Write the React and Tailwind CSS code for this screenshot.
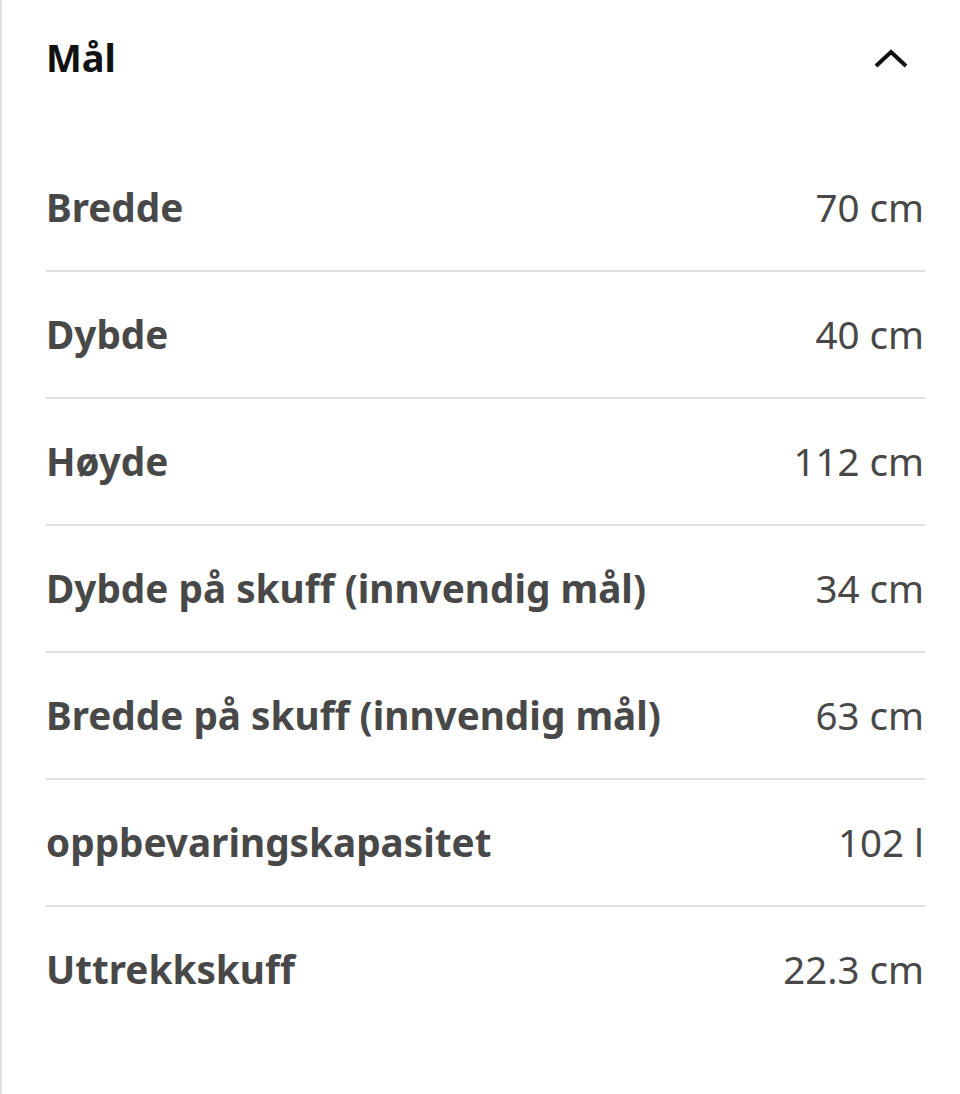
const rows = [
  ["Bredde", "70 cm"],
  ["Dybde", "40 cm"],
  ["Høyde", "112 cm"],
  ["Dybde på skuff (innvendig mål)", "34 cm"],
  ["Bredde på skuff (innvendig mål)", "63 cm"],
  ["oppbevaringskapasitet", "102 l"],
  ["Uttrekkskuff", "22.3 cm"],
];

export default function App() {
  return (
    <div
      className="min-h-[1094px] bg-white border-l-2 border-[#e0e0e0] pl-[44px] pr-[35px]"
      style={{ fontFamily: '"Noto Sans", "Open Sans", sans-serif' }}
    >
      {/* header */}
      <div className="flex items-center justify-between pt-[29px] pb-[59px]">
        <h2 className="text-[38px] leading-[57px] font-bold text-[#111111]">Mål</h2>
        <svg width="36" height="22" viewBox="0 0 36 22" className="mr-[16px]">
          <path d="M3 19 L18 5 L33 19" fill="none" stroke="#111" strokeWidth="4" />
        </svg>
      </div>

      {/* rows */}
      <div className="flex flex-col">
        {rows.map(([label, value], i) => (
          <div
            key={label}
            className={
              i < rows.length - 1
                ? "flex items-center justify-between py-[34px] border-b-2 border-[#e0e0e0]"
                : "flex items-center justify-between py-[34px]"
            }
          >
            <span className="text-[38.7px] leading-[57px] font-bold text-[#484848]">{label}</span>
            <span className="text-[38.5px] leading-[57px] text-[#484848] pr-[1px]">{value}</span>
          </div>
        ))}
      </div>
    </div>
  );
}
